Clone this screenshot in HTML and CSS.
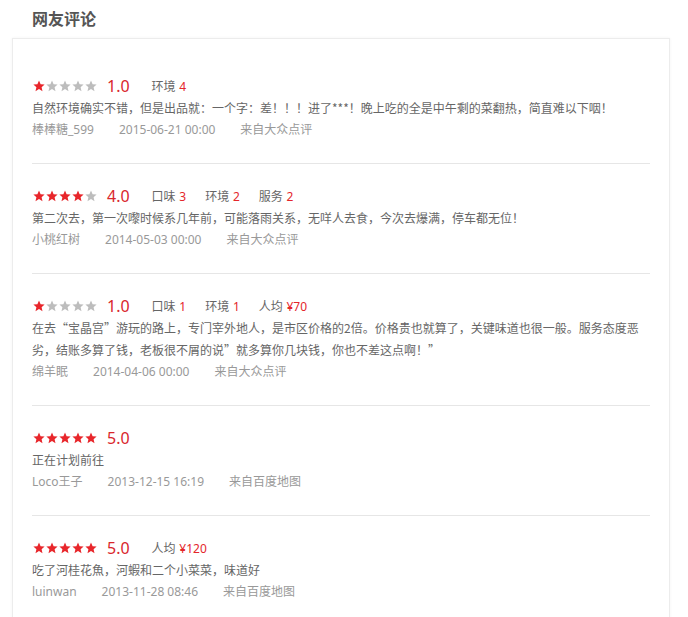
FILE: index.html
```html
<!DOCTYPE html>
<html lang="zh-CN">
<head>
  <meta charset="UTF-8">
  <title>网友评论</title>
  <link rel="stylesheet" href="styles.css">
</head>
<body>
  <svg width="0" height="0" class="defs">
    <symbol id="star" viewBox="0 0 12 12">
      <path d="M6 0.6 L7.6 4.3 L11.6 4.6 L8.6 7.2 L9.5 11.3 L6 9.1 L2.5 11.3 L3.4 7.2 L0.4 4.6 L4.4 4.3 Z"/>
    </symbol>
  </svg>

  <h2 class="title">网友评论</h2>
  <div class="card">

    <!-- review 1 -->
    <div class="review">
      <div class="score-row">
        <span class="stars">
          <svg class="star on"><use href="#star"/></svg><svg class="star"><use href="#star"/></svg><svg class="star"><use href="#star"/></svg><svg class="star"><use href="#star"/></svg><svg class="star"><use href="#star"/></svg>
        </span>
        <span class="rate">1.0</span>
        <span class="tag">环境 <em>4</em></span>
      </div>
      <p class="content">自然环境确实不错，但是出品就：一个字：差！！！进了***！晚上吃的全是中午剩的菜翻热，简直难以下咽！</p>
      <div class="meta">
        <span>棒棒糖_599</span>
        <span>2015-06-21 00:00</span>
        <span>来自大众点评</span>
      </div>
    </div>

    <!-- review 2 -->
    <div class="review">
      <div class="score-row">
        <span class="stars">
          <svg class="star on"><use href="#star"/></svg><svg class="star on"><use href="#star"/></svg><svg class="star on"><use href="#star"/></svg><svg class="star on"><use href="#star"/></svg><svg class="star"><use href="#star"/></svg>
        </span>
        <span class="rate">4.0</span>
        <span class="tag">口味 <em>3</em></span>
        <span class="tag">环境 <em>2</em></span>
        <span class="tag">服务 <em>2</em></span>
      </div>
      <p class="content">第二次去，第一次嚟时候系几年前，可能落雨关系，无咩人去食，今次去爆满，停车都无位！</p>
      <div class="meta">
        <span>小桃红树</span>
        <span>2014-05-03 00:00</span>
        <span>来自大众点评</span>
      </div>
    </div>

    <!-- review 3 -->
    <div class="review">
      <div class="score-row">
        <span class="stars">
          <svg class="star on"><use href="#star"/></svg><svg class="star"><use href="#star"/></svg><svg class="star"><use href="#star"/></svg><svg class="star"><use href="#star"/></svg><svg class="star"><use href="#star"/></svg>
        </span>
        <span class="rate">1.0</span>
        <span class="tag">口味 <em>1</em></span>
        <span class="tag">环境 <em>1</em></span>
        <span class="tag">人均 <em>¥70</em></span>
      </div>
      <p class="content">在去“宝晶宫”游玩的路上，专门宰外地人，是市区价格的2倍。价格贵也就算了，关键味道也很一般。服务态度恶劣，结账多算了钱，老板很不屑的说”就多算你几块钱，你也不差这点啊！”</p>
      <div class="meta">
        <span>绵羊眠</span>
        <span>2014-04-06 00:00</span>
        <span>来自大众点评</span>
      </div>
    </div>

    <!-- review 4 -->
    <div class="review">
      <div class="score-row">
        <span class="stars">
          <svg class="star on"><use href="#star"/></svg><svg class="star on"><use href="#star"/></svg><svg class="star on"><use href="#star"/></svg><svg class="star on"><use href="#star"/></svg><svg class="star on"><use href="#star"/></svg>
        </span>
        <span class="rate">5.0</span>
      </div>
      <p class="content">正在计划前往</p>
      <div class="meta">
        <span>Loco王子</span>
        <span>2013-12-15 16:19</span>
        <span>来自百度地图</span>
      </div>
    </div>

    <!-- review 5 -->
    <div class="review">
      <div class="score-row">
        <span class="stars">
          <svg class="star on"><use href="#star"/></svg><svg class="star on"><use href="#star"/></svg><svg class="star on"><use href="#star"/></svg><svg class="star on"><use href="#star"/></svg><svg class="star on"><use href="#star"/></svg>
        </span>
        <span class="rate">5.0</span>
        <span class="tag">人均 <em>¥120</em></span>
      </div>
      <p class="content">吃了河桂花魚，河蝦和二个小菜菜，味道好</p>
      <div class="meta">
        <span>luinwan</span>
        <span>2013-11-28 08:46</span>
        <span>来自百度地图</span>
      </div>
    </div>

  </div>
</body>
</html>
```

FILE: styles.css
```css
/* General Styles */
* {
  margin: 0;
  padding: 0;
  box-sizing: border-box;
}

body {
  font-family: "Noto Sans CJK SC", "Noto Sans", sans-serif;
  font-size: 12px;
  line-height: 22px;
  background-color: #fff;
  color: #666;
}

.defs {
  position: absolute;
  width: 0;
  height: 0;
}

.title {
  height: 38px;
  padding: 6px 0 0 32px;
  font-size: 16px;
  line-height: 24px;
  font-weight: bold;
  color: #555;
}

.card {
  margin: 0 18px 0 12px;
  padding: 15px 19px 0;
  border: 1px solid #ececec;
  box-shadow: 0 0 3px rgba(0, 0, 0, 0.05);
}

/* Review item */
.review {
  padding: 21px 0 22px;
  border-bottom: 1px solid #e6e6e6;
}

.review:last-child {
  border-bottom: none;
}

.score-row {
  display: flex;
  align-items: center;
  height: 22px;
}

.stars {
  display: flex;
  gap: 1px;
  padding-left: 1px;
}

.star {
  width: 12px;
  height: 12px;
  fill: #bdbdbd;
}

.star.on {
  fill: #e8262b;
}

.rate {
  margin: 0 22px 0 10px;
  font-family: "Noto Sans", "Noto Sans CJK SC", sans-serif;
  font-size: 16px;
  color: #d9262c;
}

.tag {
  margin-right: 19px;
  color: #666;
}

.tag em {
  font-family: "Noto Sans", "Noto Sans CJK SC", sans-serif;
  font-style: normal;
  color: #e4262b;
  margin-left: 1px;
}

.content {
  color: #666;
}

.meta {
  display: flex;
  gap: 25px;
  font-family: "Noto Sans", "Noto Sans CJK SC", sans-serif;
  color: #999;
}
```
